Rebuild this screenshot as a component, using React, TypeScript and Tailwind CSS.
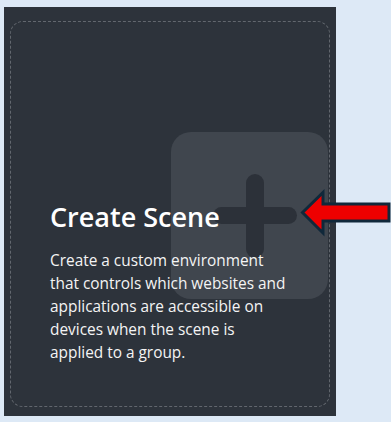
import React from "react";

const PlusTile: React.FC = () => (
    <div className="absolute left-[160px] top-[110px] w-[157px] h-[167px] rounded-[20px] bg-[#40464e] grid place-items-center pl-[11px]">
        {/* plus glyph: two bars stacked in one grid cell */}
        <div className="col-start-1 row-start-1 w-[18px] h-[84px] rounded-full bg-[#2c3139]" />
        <div className="col-start-1 row-start-1 w-[84px] h-[17px] rounded-full bg-[#2c3139]" />
    </div>
);

const Arrow: React.FC = () => (
    <svg
        className="absolute left-[300px] top-[189px]"
        width="91"
        height="48"
        viewBox="0 0 91 48"
    >
        <polygon
            points="2.5,23.5 23,3.5 23,15 89,15 89,32 23,32 23,44"
            fill="#ee0000"
            stroke="#10283a"
            strokeWidth="3"
            strokeLinejoin="miter"
        />
    </svg>
);

export default function App() {
    return (
        <div className="relative w-[391px] h-[422px] bg-[#dde9f6] pt-[7px] pl-1 font-['Open_Sans',sans-serif]">
            <div className="w-[332px] h-[409px] bg-[#2d333b] pt-[14px] pl-[6px] pr-[6px] pb-[9px]">
                <div className="relative h-full rounded-[13px] border border-dashed border-[#62676e] pt-[177px] pl-[39px]">
                    <PlusTile />
                    <div className="relative flex flex-col gap-[14px]">
                        <h2 className="text-[27px] leading-[36px] font-semibold text-white">
                            Create Scene
                        </h2>
                        <p className="w-[240px] text-[15.4px] leading-[23px] text-[#f4f4f4]">
                            Create a custom environment that controls which
                            websites and applications are accessible on devices
                            when the scene is applied to a group.
                        </p>
                    </div>
                </div>
            </div>
            <Arrow />
        </div>
    );
}
